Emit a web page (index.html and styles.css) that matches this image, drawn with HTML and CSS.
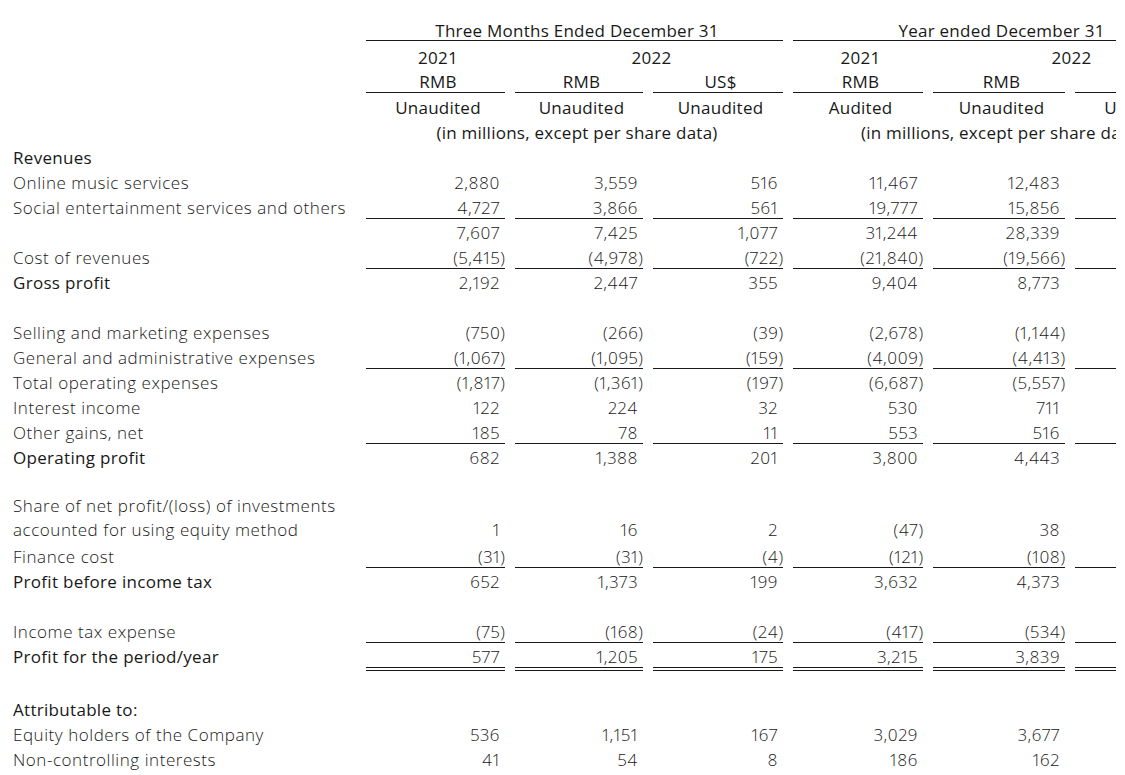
FILE: index.html
```html
<!DOCTYPE html>
<html lang="en">
<head>
<meta charset="utf-8">
<title>Consolidated Income Statement</title>
<link rel="stylesheet" href="styles.css">
</head>
<body>
<div class="clip">
<table class="fin">
<colgroup>
<col class="c-label"><col class="c1"><col class="c2"><col class="c3"><col class="c4"><col class="c5"><col class="c6">
</colgroup>
<thead>
<tr class="h0"><td class="l"></td><td class="h line" colspan="3">Three Months Ended December 31</td><td class="h line" colspan="3">Year ended December 31</td></tr>
<tr class="h1"><td class="l"></td><td class="h">2021</td><td class="h" colspan="2">2022</td><td class="h">2021</td><td class="h" colspan="2">2022</td></tr>
<tr class="h2"><td class="l"></td><td class="h line">RMB</td><td class="h line">RMB</td><td class="h line">US$</td><td class="h line">RMB</td><td class="h line">RMB</td><td class="h line last">US$</td></tr>
<tr class="h3"><td class="l"></td><td class="h">Unaudited</td><td class="h">Unaudited</td><td class="h">Unaudited</td><td class="h">Audited</td><td class="h">Unaudited</td><td class="h last">Unaudited</td></tr>
<tr class="h4"><td class="l"></td><td class="h" colspan="3">(in millions, except per share data)</td><td class="h" colspan="3">(in millions, except per share data)</td></tr>
</thead>
<tbody>
<tr><td class="l b">Revenues</td><td class="v"></td><td class="v"></td><td class="v"></td><td class="v"></td><td class="v"></td><td class="v"></td></tr>
<tr><td class="l">Online music services</td><td class="v">2,880</td><td class="v">3,559</td><td class="v">516</td><td class="v">11,467</td><td class="v">12,483</td><td class="v">1,810</td></tr>
<tr class="u"><td class="l">Social entertainment services and others</td><td class="v">4,727</td><td class="v">3,866</td><td class="v">561</td><td class="v">19,777</td><td class="v">15,856</td><td class="v">2,299</td></tr>
<tr><td class="l"></td><td class="v">7,607</td><td class="v">7,425</td><td class="v">1,077</td><td class="v">31,244</td><td class="v">28,339</td><td class="v">4,109</td></tr>
<tr class="u"><td class="l">Cost of revenues</td><td class="v">(5,415<span class="cp">)</span></td><td class="v">(4,978<span class="cp">)</span></td><td class="v">(722<span class="cp">)</span></td><td class="v">(21,840<span class="cp">)</span></td><td class="v">(19,566<span class="cp">)</span></td><td class="v">(2,837<span class="cp">)</span></td></tr>
<tr><td class="l b">Gross profit</td><td class="v">2,192</td><td class="v">2,447</td><td class="v">355</td><td class="v">9,404</td><td class="v">8,773</td><td class="v">1,272</td></tr>
<tr class="gap"><td class="l"></td><td class="v"></td><td class="v"></td><td class="v"></td><td class="v"></td><td class="v"></td><td class="v"></td></tr>
<tr><td class="l">Selling and marketing expenses</td><td class="v">(750<span class="cp">)</span></td><td class="v">(266<span class="cp">)</span></td><td class="v">(39<span class="cp">)</span></td><td class="v">(2,678<span class="cp">)</span></td><td class="v">(1,144<span class="cp">)</span></td><td class="v">(166<span class="cp">)</span></td></tr>
<tr class="u"><td class="l">General and administrative expenses</td><td class="v">(1,067<span class="cp">)</span></td><td class="v">(1,095<span class="cp">)</span></td><td class="v">(159<span class="cp">)</span></td><td class="v">(4,009<span class="cp">)</span></td><td class="v">(4,413<span class="cp">)</span></td><td class="v">(640<span class="cp">)</span></td></tr>
<tr><td class="l">Total operating expenses</td><td class="v">(1,817<span class="cp">)</span></td><td class="v">(1,361<span class="cp">)</span></td><td class="v">(197<span class="cp">)</span></td><td class="v">(6,687<span class="cp">)</span></td><td class="v">(5,557<span class="cp">)</span></td><td class="v">(806<span class="cp">)</span></td></tr>
<tr><td class="l">Interest income</td><td class="v">122</td><td class="v">224</td><td class="v">32</td><td class="v">530</td><td class="v">711</td><td class="v">103</td></tr>
<tr class="u"><td class="l">Other gains, net</td><td class="v">185</td><td class="v">78</td><td class="v">11</td><td class="v">553</td><td class="v">516</td><td class="v">75</td></tr>
<tr><td class="l b">Operating profit</td><td class="v">682</td><td class="v">1,388</td><td class="v">201</td><td class="v">3,800</td><td class="v">4,443</td><td class="v">644</td></tr>
<tr class="gap"><td class="l"></td><td class="v"></td><td class="v"></td><td class="v"></td><td class="v"></td><td class="v"></td><td class="v"></td></tr>
<tr class="two"><td class="l">Share of net profit/(loss) of investments<br>accounted for using equity method</td><td class="v">1</td><td class="v">16</td><td class="v">2</td><td class="v">(47<span class="cp">)</span></td><td class="v">38</td><td class="v">6</td></tr>
<tr class="u"><td class="l">Finance cost</td><td class="v">(31<span class="cp">)</span></td><td class="v">(31<span class="cp">)</span></td><td class="v">(4<span class="cp">)</span></td><td class="v">(121<span class="cp">)</span></td><td class="v">(108<span class="cp">)</span></td><td class="v">(16<span class="cp">)</span></td></tr>
<tr><td class="l b">Profit before income tax</td><td class="v">652</td><td class="v">1,373</td><td class="v">199</td><td class="v">3,632</td><td class="v">4,373</td><td class="v">634</td></tr>
<tr class="gap"><td class="l"></td><td class="v"></td><td class="v"></td><td class="v"></td><td class="v"></td><td class="v"></td><td class="v"></td></tr>
<tr class="u"><td class="l">Income tax expense</td><td class="v">(75<span class="cp">)</span></td><td class="v">(168<span class="cp">)</span></td><td class="v">(24<span class="cp">)</span></td><td class="v">(417<span class="cp">)</span></td><td class="v">(534<span class="cp">)</span></td><td class="v">(77<span class="cp">)</span></td></tr>
<tr class="dd"><td class="l b">Profit for the period/year</td><td class="v">577</td><td class="v">1,205</td><td class="v">175</td><td class="v">3,215</td><td class="v">3,839</td><td class="v">557</td></tr>
<tr class="gap"><td class="l"></td><td class="v"></td><td class="v"></td><td class="v"></td><td class="v"></td><td class="v"></td><td class="v"></td></tr>
<tr><td class="l b">Attributable to:</td><td class="v"></td><td class="v"></td><td class="v"></td><td class="v"></td><td class="v"></td><td class="v"></td></tr>
<tr><td class="l">Equity holders of the Company</td><td class="v">536</td><td class="v">1,151</td><td class="v">167</td><td class="v">3,029</td><td class="v">3,677</td><td class="v">533</td></tr>
<tr><td class="l">Non-controlling interests</td><td class="v">41</td><td class="v">54</td><td class="v">8</td><td class="v">186</td><td class="v">162</td><td class="v">24</td></tr>
</tbody>
</table>
</div>
</body>
</html>
```
FILE: styles.css
```css
* {
  box-sizing: border-box;
}

html,
body {
  margin: 0;
  padding: 0;
  background: #ffffff;
}

body {
  font-family: "Open Sans", Lato, "Liberation Sans", sans-serif;
  font-size: 17px;
  color: #181818;
}

.clip {
  width: 1116px;
  overflow: hidden;
  padding-top: 19px;
}

.fin {
  table-layout: fixed;
  width: 1212px;
  margin-left: 3px;
  border-collapse: separate;
  border-spacing: 10px 0;
}

.c-label { width: 343px; }
.c1 { width: 139px; }
.c2 { width: 128px; }
.c3 { width: 130px; }
.c4 { width: 130px; }
.c5 { width: 132px; }
.c6 { width: 130px; }

.fin td {
  padding: 4px 6px 0 0;
  line-height: 20px;
  border-bottom: 1px solid transparent;
  vertical-align: top;
  white-space: nowrap;
  font-weight: 300;
}

.fin td.l {
  text-align: left;
  padding-right: 0;
  letter-spacing: 0.55px;
}

.fin td.b {
  font-weight: 500;
  letter-spacing: 0.3px;
}

.fin td.v {
  text-align: right;
  padding-right: 5px;
  letter-spacing: 0.6px;
  font-variant-numeric: proportional-nums;
}

.cp {
  margin-right: -5.6px;
}

.fin td.h {
  text-align: center;
  font-weight: 400;
  padding-left: 5px;
  padding-right: 0;
  letter-spacing: 0.25px;
}

.fin td.h.last {
  padding-left: 14px;
}

.fin td.line {
  border-bottom-color: #181818;
}

.fin .h0 td { padding-top: 2px; line-height: 19px; }
.fin .h1 td { padding-top: 7px; }
.fin .h2 td { padding-top: 3px; }
.fin .h3 td { padding-top: 5px; }
.fin .h4 td { padding-top: 4px; }

.fin .gap td {
  height: 25px;
}

.u td.v {
  border-bottom-color: #181818;
}

.dd td.v {
  border-bottom: 4px double #181818;
}

.two td.l {
  padding-top: 0;
  line-height: 24px;
}

.two td.v {
  vertical-align: bottom;
  padding-bottom: 2px;
}
```
